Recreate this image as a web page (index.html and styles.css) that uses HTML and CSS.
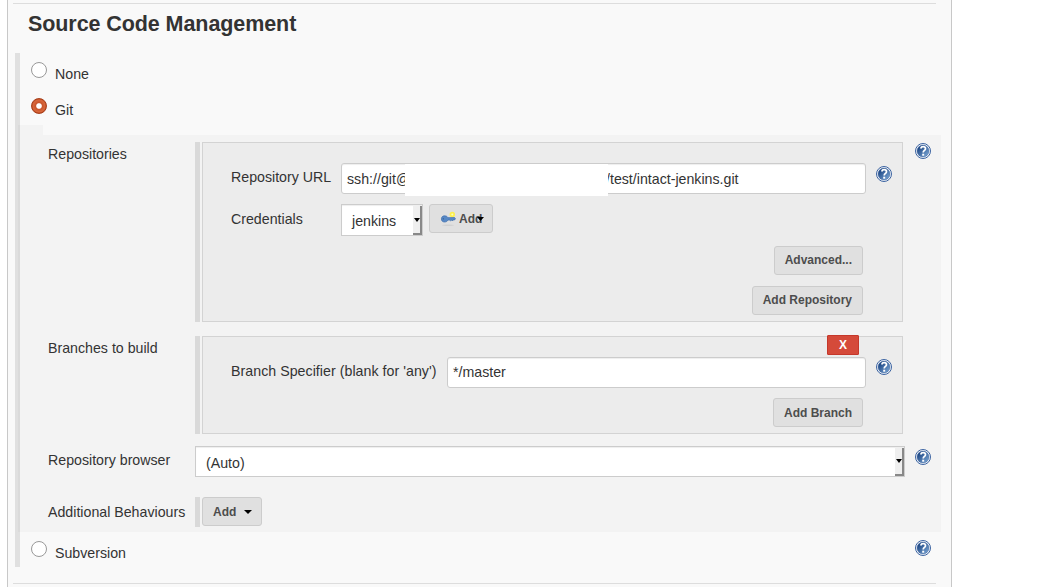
FILE: index.html
```html
<!DOCTYPE html>
<html lang="en">
<head>
<meta charset="utf-8">
<title>Source Code Management</title>
<link rel="stylesheet" href="styles.css">
</head>
<body>
<svg class="defs" width="0" height="0" aria-hidden="true">
  <defs>
    <linearGradient id="blue" x1="0" y1="0" x2="1" y2="1"><stop offset="0.2" stop-color="#204a87"/><stop offset="1" stop-color="#83aedb"/></linearGradient>
    <symbol id="help" viewBox="0 0 16 16">
      <circle cx="8" cy="8" r="7.5" fill="#fff" stroke="#3a62a0"/>
      <circle cx="8" cy="8" r="6" fill="url(#blue)" stroke="#3e659f" stroke-width=".5"/>
      <path d="M5.700 5.500C6 4.200 7 3.700 8.100 3.700c1.500 0 2.400.8 2.400 2C10.500 7.300 8.200 7.500 8.200 9.500" fill="none" stroke="#fff" stroke-width="1.700"/>
      <path d="M7.200 10.700h2v2h-2z" fill="#fff"/>
    </symbol>
  </defs>
</svg>
<main class="panel">
  <h1 class="title">Source Code Management</h1>
  <div class="choices">
    <label class="choice"><span class="radio"></span><span class="choice-name">None</span></label>
    <label class="choice"><span class="radio radio-on"></span><span class="choice-name">Git</span></label>
    <div class="tab"></div>
    <section class="details">
      <div class="row row-repos">
        <div class="label">Repositories</div>
        <div class="chunk"><div class="box box-repos">
          <div class="field">
            <div class="name">Repository URL</div>
            <div class="input"><span>ssh://git@</span><span class="cover"></span><span class="url-tail">/test/intact-jenkins.git</span></div>
            <svg class="help"><use href="#help"/></svg>
          </div>
          <div class="field field-cred">
            <div class="name">Credentials</div>
            <div class="select select-small"><span>jenkins</span><i class="drop"><svg width="6" height="4"><path d="M0 0h6L3 4z"/></svg></i></div>
            <div class="button button-key">
              <svg class="key" width="16" height="16" viewBox="0 0 16 16"><ellipse cx="8" cy="14.300" rx="6" ry=".8" fill="#d0d0d0"/><circle cx="12.300" cy="3.500" r="2.700" fill="#fcf04d"/><circle cx="12.300" cy="3.500" r="1" fill="#fffbc0"/><path d="M4.500 4.800c1.700 0 2.900.8 3.500 1.900L14.500 6.500l1 1.200-1 1.300H13l-.8.900-.9-.9-1 .8-.9-.8H8C7.400 10.300 6.200 11 4.500 11 2.500 11 1.400 9.600 1.400 7.900S2.500 4.800 4.500 4.800z" fill="#5788c5" stroke="#3d6dac" stroke-width=".7"/><circle cx="3.300" cy="7.800" r=".6" fill="#284f87"/></svg>
              <span>Add</span>
              <svg class="caret-over" width="7" height="4"><path d="M0 0h7L3.500 4z"/></svg>
            </div>
          </div>
          <div class="actions">
            <div class="button">Advanced...</div>
            <div class="button">Add Repository</div>
          </div>
        </div></div>
        <svg class="help"><use href="#help"/></svg>
      </div>
      <div class="row row-branches">
        <div class="label">Branches to build</div>
        <div class="chunk"><div class="box box-branches">
          <div class="delete">X</div>
          <div class="field">
            <div class="name name-branch">Branch Specifier (blank for 'any')</div>
            <div class="input input-branch">*/master</div>
            <svg class="help"><use href="#help"/></svg>
          </div>
          <div class="actions actions-branch"><div class="button">Add Branch</div></div>
        </div></div>
      </div>
      <div class="row row-browser">
        <div class="label">Repository browser</div>
        <div class="select select-wide"><span>(Auto)</span><i class="drop"><svg width="6" height="4"><path d="M0 0h6L3 4z"/></svg></i></div>
        <svg class="help"><use href="#help"/></svg>
      </div>
      <div class="row row-extra">
        <div class="label">Additional Behaviours</div>
        <div class="chunk"><div class="button button-menu">Add<svg width="8" height="4"><path d="M0 0h8L4 4z"/></svg></div></div>
      </div>
    </section>
    <label class="choice choice-svn"><span class="radio"></span><span class="choice-name">Subversion</span><svg class="help"><use href="#help"/></svg></label>
  </div>
  <div class="rule"></div>
</main>
</body>
</html>
```
FILE: styles.css
```css
* { box-sizing: border-box; }
body { margin: 0; background: #fff; color: #333; font: 14.2px/18px "Liberation Sans", Arial, sans-serif; overflow: hidden; }
.defs { display: block; position: absolute; }
.panel { margin-left: 7px; width: 945px; height: 587px; padding: 3px 15px 0 5px; background: #f9f9f9; border: solid #c8c8c8; border-width: 0 1px; }
.title { margin: 0; height: 50px; padding: 7px 0 0 15px; border-top: 1px solid #ddd; font-size: 21.5px; letter-spacing: -.08px; line-height: 26px; font-weight: bold; }
.choices { margin-left: 2px; width: 926px; height: 514px; border-left: 5px solid #e0e0e0; }
.choice { display: flex; height: 36px; padding: 9px 0 0 11px; }
.radio { width: 16px; height: 16px; flex: none; border: 1px solid #999; border-radius: 50%; background: #fff; }
.radio-on { border-color: #a8401c; background: radial-gradient(circle, #fff 0 2.3px, #c8552b 3.3px, #d9683c 6px, #c04b20 7px); }
.choice-name { margin: 3px 0 0 8px; }
.tab { width: 25px; height: 10px; margin-left: -2px; background: rgba(0,0,0,.025); }
.details { width: 923px; height: 397px; margin-left: -2px; padding: 7px 0 0 30px; background: rgba(0,0,0,.025); }
.row { display: flex; align-items: flex-start; }
.label { width: 147px; flex: none; padding-top: 3px; white-space: nowrap; }
.row-repos { height: 194px; }
.row-branches { height: 110px; }
.row-browser { height: 51px; }
.row-browser .label { padding-top: 5px; }
.row-extra .label { padding-top: 6px; }
.row-browser .help { margin: 3px 0 0 10px; }
.row-repos > .help { margin: 1px 0 0 12px; }
.chunk { border-left: 5px solid #d9d9d9; padding-left: 2px; }
.box { width: 701px; padding: 20px 36px 0 28px; border: 1px solid #d3d3d3; background: #ececec; }
.box-repos { height: 180px; }
.box-branches { height: 98px; position: relative; }
.field { display: flex; align-items: flex-start; width: 661px; }
.name { width: 110px; flex: none; padding-top: 5px; white-space: nowrap; }
.field-cred .name { padding-top: 6px; }
.name-branch { width: 216px; letter-spacing: .04px; }
.input { position: relative; flex: 1; height: 31px; padding: 7px 5px 0; line-height: 16px; background: #fff; border: 1px solid #ccc; border-radius: 3px; box-shadow: inset 0 1px 1px rgba(0,0,0,.07); white-space: nowrap; }
.input-branch { padding-top: 6px; }
.cover { position: absolute; left: 63px; top: 0; width: 203px; height: 32px; background: #fff; z-index: 1; }
.url-tail { position: absolute; left: 264px; top: 7px; }
.help { width: 16px; height: 16px; flex: none; }
.field > .help { margin: 3px 0 0 10px; }
.box-branches .field > .help { margin-top: 2px; }
.field-cred { margin-top: 10px; height: 42px; }
.select { display: flex; justify-content: space-between; background: #fff; border: 1px solid #ccc; box-shadow: inset 0 1px 1px rgba(0,0,0,.07); }
.select span { padding: 8px 0 0 10px; line-height: 16px; }
.select-small { width: 82px; height: 32px; }
.select-wide { width: 710px; height: 31px; }
.drop { display: flex; align-items: center; width: 9px; margin-top: 1px; padding-left: 1px; background: #efefef; border: solid #888; border-width: 0 2px 2px 0; }
.drop svg { flex: none; }
.button { position: relative; height: 29px; padding: 6px 10px 0; border: 1px solid #ccc; border-radius: 3px; background: #e0e0e0; color: #4d4d4d; font-size: 12px; line-height: 15px; font-weight: bold; white-space: nowrap; }
.button-key { width: 64px; margin-left: 6px; padding-left: 29px; }
.key { position: absolute; left: 10px; top: 6px; }
.caret-over { position: absolute; left: 47px; top: 12px; }
.actions { display: flex; flex-direction: column; align-items: flex-end; gap: 11px; width: 632px; }
.actions-branch { margin-top: 10px; }
.delete { position: absolute; right: 43px; top: -2px; width: 32px; height: 20px; background: #d54a3a; border: 1px solid #c5382b; border-radius: 1px; color: #fff; font-size: 12px; line-height: 18px; font-weight: bold; text-align: center; }
.row-extra .chunk { height: 30px; }
.button-menu { display: flex; width: 60px; gap: 8px; }
.actions-branch .button, .button-key, .button-menu { padding-top: 7px; }
.button-menu svg { margin-top: 5px; flex: none; }
.choice-svn .help { margin: -1px 10px 0 auto; }
.rule { height: 1px; margin-top: 16px; background: #ddd; }
```
